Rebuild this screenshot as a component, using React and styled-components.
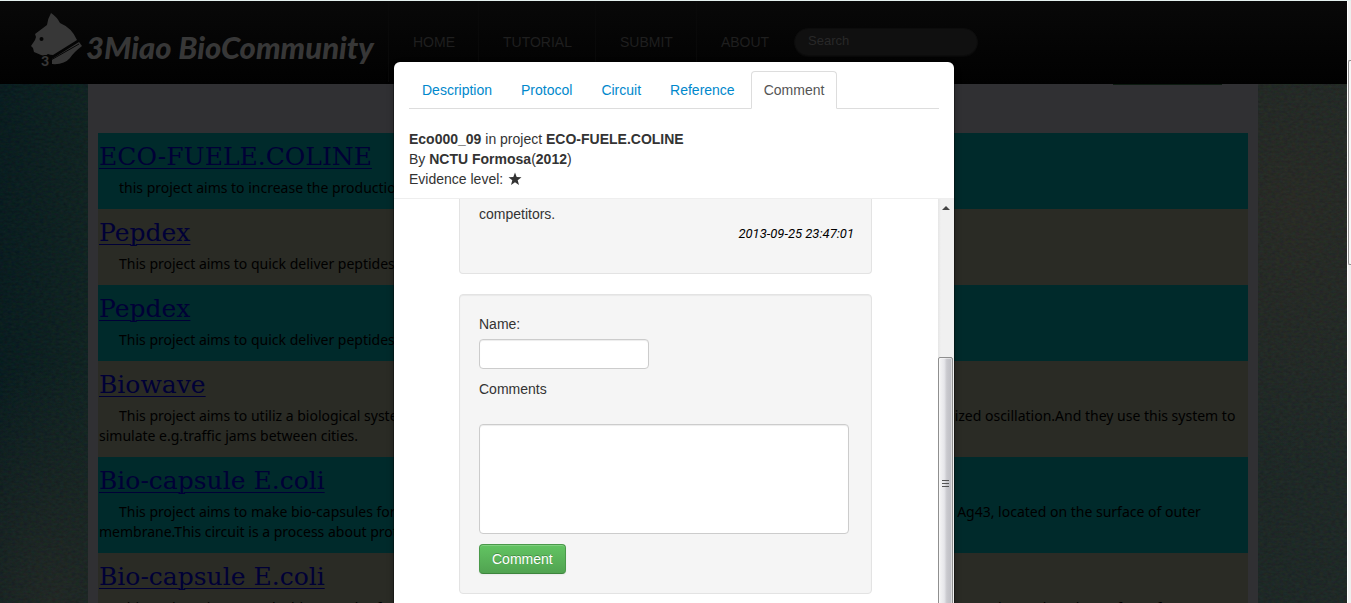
import React from "react";
import styled, { createGlobalStyle } from "styled-components";

const sans = '"Liberation Sans", Arial, sans-serif';
const copy = '"Noto Sans", "Open Sans", sans-serif';

const GlobalStyle = createGlobalStyle`
  *, *::before, *::after { box-sizing: border-box; }
  body {
    margin: 0;
    overflow: hidden;
    font: 14px/20px ${sans};
    color: #333;
    background: #101d1e;
  }
`;

const Window = styled.div`
  display: flex;
  height: 100vh;
  overflow: hidden;
  border-top: 1px solid #e4f0ee;
`;

const Page = styled.div`
  position: relative;
  flex: 1;
  min-width: 0;
  overflow: hidden;
  background:
    radial-gradient(ellipse 160px 260px at 96% 35%, #2a2b26, transparent),
    radial-gradient(ellipse 160px 240px at 4% 100%, #202725, transparent),
    linear-gradient(90deg, #03191e 0, #0c2121 88px, #12211f 50%, #1c2726 93%, #1e2827 100%);
`;

const Grain = styled.svg`
  position: absolute;
  inset: 0;
  width: 100%;
  height: 100%;
  opacity: 0.2;
`;

const Navbar = styled.header`
  position: relative;
  display: flex;
  align-items: center;
  height: 83px;
  padding: 0 0 2px 30px;
  background: linear-gradient(#080808, #010101);
`;

const Brand = styled.a`
  display: flex;
  align-items: center;
  flex: none;
  width: 358px;
  gap: 4px;
  padding-bottom: 4px;
  color: #373737;
  text-decoration: none;
  white-space: nowrap;
`;

const BrandName = styled.span`
  padding-top: 14px;
  font: italic 900 31px/36px Lato, sans-serif;
`;

const NavLinks = styled.nav`
  display: flex;
  align-self: stretch;
`;

const NavLink = styled.a`
  display: flex;
  align-items: center;
  padding: 0 23px 0 24px;
  border-left: 1px solid #090909;
  color: #1f1f1f;
  text-decoration: none;
`;

const Search = styled.input`
  width: 184px;
  height: 28px;
  margin-left: 2px;
  padding: 0 13px 3px;
  border: 1px solid #0c0c0c;
  border-radius: 14px;
  background: #101010;
  box-shadow: 0 1px 0 #080808;
  font: 13px/20px ${sans};
  &::placeholder { color: #282828; opacity: 1; }
`;

const Content = styled.div`
  padding-right: 1px;
`;

const Container = styled.main`
  position: relative;
  max-width: 1170px;
  margin: 0 auto;
  padding: 0 10px;
  background: #303033;
`;

const Toolbar = styled.div`
  display: flex;
  justify-content: flex-end;
  height: 49px;
  padding-right: 26px;
`;

const ToolbarEdge = styled.div`
  width: 109px;
  height: 1px;
  background: #0c1a10;
`;

const Project = styled.article`
  padding: 3px 1px 11px;
  background: ${({ $alt }) => ($alt ? "#2a2b25" : "#002a2b")};
`;

const ProjectTitle = styled.h2`
  margin: 0;
  font: 25px/42px "DejaVu Serif", serif;
  a { color: #000036; text-decoration-thickness: 1px; text-underline-offset: 3px; }
`;

const ProjectText = styled.p`
  margin: 0;
  font: 14px/20px ${copy};
  color: #000;
  text-indent: 20px;
`;

const Overlay = styled.div`
  position: absolute;
  inset: 0;
  display: flex;
  align-items: flex-start;
  justify-content: center;
  padding: 61px 0 0 1px;
`;

const Modal = styled.section`
  width: 560px;
  flex: none;
  border-radius: 6px;
  background: #fff;
  box-shadow: 0 0 0 1px rgba(0, 0, 0, 0.3), 0 3px 7px rgba(0, 0, 0, 0.3);
`;

const ModalHeader = styled.div`
  padding: 9px 15px;
  border-bottom: 1px solid #eee;
`;

const Tabs = styled.nav`
  display: flex;
  gap: 3px;
  margin-bottom: 20px;
  border-bottom: 1px solid #ddd;
`;

const Tab = styled.a`
  margin-bottom: -1px;
  padding: 8px 12px;
  border: 1px solid;
  border-color: ${({ $active }) => ($active ? "#ddd #ddd #fff" : "transparent transparent #ddd")};
  border-radius: 4px 4px 0 0;
  color: ${({ $active }) => ($active ? "#555" : "#08c")};
  text-decoration: none;
`;

const Star = styled.svg`
  width: 14px;
  height: 14px;
  margin-left: 1px;
  vertical-align: -2px;
`;

const ModalBody = styled.div`
  display: flex;
`;

const Comments = styled.div`
  flex: 1;
  padding: 0 66px 15px 65px;
`;

const Well = styled.div`
  padding: 19px;
  margin-bottom: 20px;
  border: 1px solid #e3e3e3;
  border-radius: 4px;
  background: #f5f5f5;
  box-shadow: inset 0 1px 1px rgba(0, 0, 0, 0.05);
`;

const ScrolledWell = styled(Well)`
  padding: 5px 17px 19px 19px;
  border-top: 0;
  border-radius: 0 0 4px 4px;
  box-shadow: none;
`;

const CommentText = styled.p`
  margin: 0;
`;

const Stamp = styled.time`
  display: block;
  margin-bottom: 10px;
  color: #000;
  text-align: right;
  font: italic 13px/20px Roboto, sans-serif;
`;

const Field = styled.div`
  display: flex;
  flex-direction: column;
  align-items: flex-start;
  gap: ${({ $gap }) => $gap};
  margin-bottom: 10px;
`;

const TextInput = styled.input`
  width: 170px;
  height: 30px;
  padding: 4px 6px;
  border: 1px solid #ccc;
  border-radius: 4px;
  background: #fff;
  box-shadow: inset 0 1px 1px rgba(0, 0, 0, 0.075);
  font: 14px/20px ${sans};
`;

const TextArea = styled(TextInput)`
  width: 370px;
  height: 110px;
  resize: none;
`;

const Submit = styled.button`
  display: block;
  height: 30px;
  padding: 4px 12px;
  border: 1px solid #4a994a;
  border-bottom-color: #3d853d;
  border-radius: 4px;
  background: linear-gradient(#62c462, #51a351);
  box-shadow: inset 0 1px 0 rgba(255, 255, 255, 0.2), 0 1px 2px rgba(0, 0, 0, 0.05);
  color: #fff;
  font: 14px/20px ${sans};
  text-shadow: 0 -1px 0 rgba(0, 0, 0, 0.25);
`;

const Scrollbar = styled.div`
  display: flex;
  flex-direction: column;
  width: 16px;
  padding-top: 7px;
  background: linear-gradient(90deg, #e6e6e6, #f0f0f0 3px, #f0f0f0);
`;

const ScrollArrow = styled.svg`
  width: 8px;
  height: 4px;
  margin: 0 4px;
`;

const Thumb = styled.div`
  display: flex;
  align-items: center;
  justify-content: center;
  width: 15px;
  height: 254px;
  margin-top: 147px;
  border: 1px solid #8f8f8f;
  border-radius: 2px;
  background: linear-gradient(90deg, #f6f6f6, #e6e6ea 40%, #c9c9ce 60%, #bcbcc2);
  box-shadow: inset 0 0 0 1px #fafafa80;
`;

const WindowScrollbar = styled.div`
  flex: none;
  width: 4px;
  padding-top: 59px;
  border-left: 1px solid #fff;
  background: #eeeeee;
`;

const WindowThumb = styled.div`
  height: 205px;
  border: 1px solid #8f8f8f;
  border-right: 0;
  border-radius: 2px 0 0 2px;
  background: #f6f6f6;
`;

const capsule =
  "This project aims to make bio-capsules for the delivery of useful target proteins, built with the help of an autotransporter called Ag43, located on the surface of outer membrane.This circuit is a process about protein display.";

const projects = [
  ["ECO-FUELE.COLINE", "this project aims to increase the production of isobutanol."],
  ["Pepdex", "This project aims to quick deliver peptides."],
  ["Pepdex", "This project aims to quick deliver peptides."],
  [
    "Biowave",
    "This project aims to utiliz a biological system and to build a group of living bacterial cells which together can show the synchronized oscillation.And they use this system to simulate e.g.traffic jams between cities.",
  ],
  ["Bio-capsule E.coli", capsule],
  ["Bio-capsule E.coli", capsule],
];

const tabs = ["Description", "Protocol", "Circuit", "Reference", "Comment"];

function CatLogo() {
  return (
    <svg width="52" height="56" viewBox="30 12 52 56" aria-hidden="true">
      <path
        fill="#373737"
        d="M51 13 Q57 17 60 23 Q72 28 77 40 L53 55 Q50 55 48 54 Q45 57 41 55 L34 52 L33 48 L31 46 L35 40 L36 37 L35 34 L47 25 Q48 18 51 13Z"
      />
      <circle cx="41.500" cy="39" r="2" fill="#050505" />
      <path fill="#373737" d="M52 59 L79 42 L82 46 Q74 52 70 58 Q64 65 52 64Z" />
      <path d="M51 60 L79 44" stroke="#050505" strokeWidth="1" />
      <text x="41" y="66" fill="#373737" stroke="#050505" strokeWidth="2" paintOrder="stroke" fontFamily="Lato, sans-serif" fontWeight="900" fontSize="14">
        3
      </text>
    </svg>
  );
}

export default function App() {
  return (
    <>
      <GlobalStyle />
      <Window>
        <Page>
          <Grain aria-hidden="true">
            <filter id="grain" colorInterpolationFilters="sRGB">
              <feTurbulence type="fractalNoise" baseFrequency="0.25 0.4" numOctaves="3" seed="4" />
              <feColorMatrix values="0.3 0 0 0 0  0 0.35 0 0 0  0 0 0.3 0 0  0 0 0 0 1" />
            </filter>
            <rect width="100%" height="100%" filter="url(#grain)" />
          </Grain>
          <Navbar>
            <Brand href="#home">
              <CatLogo />
              <BrandName>3Miao BioCommunity</BrandName>
            </Brand>
            <NavLinks>
              {["HOME", "TUTORIAL", "SUBMIT", "ABOUT"].map((name) => (
                <NavLink key={name} href={`#${name.toLowerCase()}`}>{name}</NavLink>
              ))}
            </NavLinks>
            <Search type="search" placeholder="Search" aria-label="Search" />
          </Navbar>
          <Content>
            <Container>
              <Toolbar><ToolbarEdge /></Toolbar>
              {projects.map(([title, text], i) => (
                <Project key={i} $alt={i % 2 === 1}>
                  <ProjectTitle><a href="#project">{title}</a></ProjectTitle>
                  <ProjectText>{text}</ProjectText>
                </Project>
              ))}
            </Container>
          </Content>
          <Overlay>
            <Modal role="dialog" aria-label="Eco000_09">
              <ModalHeader>
                <Tabs>
                  {tabs.map((name) => (
                    <Tab key={name} href={`#${name.toLowerCase()}`} $active={name === "Comment"}>{name}</Tab>
                  ))}
                </Tabs>
                <div><b>Eco000_09</b> in project <b>ECO-FUELE.COLINE</b></div>
                <div>By <b>NCTU Formosa</b>(<b>2012</b>)</div>
                <div>
                  Evidence level:{" "}
                  <Star viewBox="0 0 14 14" role="img" aria-label="1 star">
                    <path fill="#333" d="M7 0.500 L8.700 5 L13.500 5.200 L9.700 8.200 L11 13 L7 10.200 L3 13 L4.300 8.200 L0.500 5.200 L5.300 5Z" />
                  </Star>
                </div>
              </ModalHeader>
              <ModalBody>
                <Comments>
                  <ScrolledWell>
                    <CommentText>competitors.</CommentText>
                    <Stamp dateTime="2013-09-25T23:47:01">2013-09-25 23:47:01</Stamp>
                  </ScrolledWell>
                  <Well as="form">
                    <Field $gap="5px">
                      <label htmlFor="name">Name:</label>
                      <TextInput id="name" type="text" />
                    </Field>
                    <Field $gap="25px">
                      <label htmlFor="comments">Comments</label>
                      <TextArea as="textarea" id="comments" />
                    </Field>
                    <Submit type="button">Comment</Submit>
                  </Well>
                </Comments>
                <Scrollbar aria-hidden="true">
                  <ScrollArrow viewBox="0 0 8 4"><path fill="#444" d="M4 0 L8 4 H0Z" /></ScrollArrow>
                  <Thumb>
                    <svg width="7" height="8" viewBox="0 0 7 8"><path stroke="#555" d="M0 0.500H7M0 3.500H7M0 6.500H7" /></svg>
                  </Thumb>
                </Scrollbar>
              </ModalBody>
            </Modal>
          </Overlay>
        </Page>
        <WindowScrollbar aria-hidden="true"><WindowThumb /></WindowScrollbar>
      </Window>
    </>
  );
}
